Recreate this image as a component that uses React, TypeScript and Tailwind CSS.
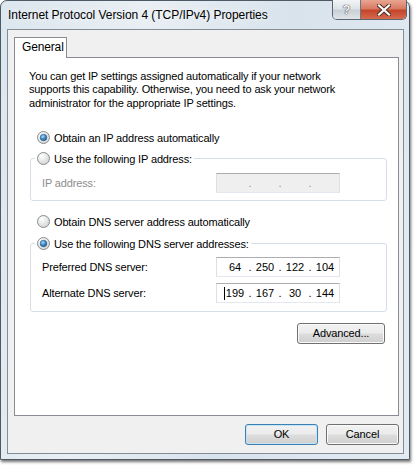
import React from "react";

const font = { fontFamily: '"Liberation Sans", Arial, sans-serif' };

const Radio = ({ checked }: { checked?: boolean }) => (
  <svg width="13" height="13" viewBox="0 0 13 13" className="shrink-0">
    <defs>
      <radialGradient id="rb" cx="0.35" cy="0.3" r="0.8">
        <stop offset="0" stopColor="#ffffff" />
        <stop offset="1" stopColor="#cfd1d3" />
      </radialGradient>
      <radialGradient id="rd" cx="0.4" cy="0.35" r="0.7">
        <stop offset="0" stopColor="#a9dcf7" />
        <stop offset="0.55" stopColor="#3f86c4" />
        <stop offset="1" stopColor="#1b4f86" />
      </radialGradient>
    </defs>
    <circle cx="6.5" cy="6.5" r="6" fill="url(#rb)" stroke="#8a8c8e" />
    {checked && <circle cx="6.5" cy="6.5" r="3.3" fill="url(#rd)" stroke="#2a5a8a" strokeWidth="0.6" />}
  </svg>
);

const RadioRow = ({ label, checked }: { label: string; checked?: boolean }) => (
  <div className="flex items-center gap-[4px] h-[14px] leading-[14px]">
    <Radio checked={checked} />
    <span>{label}</span>
  </div>
);

const IpBox = ({ values, disabled, caret }: { values: string[]; disabled?: boolean; caret?: boolean }) => (
  <div
    className={
      "w-[124px] h-[20px] border border-t-[#abadb3] border-x-[#dbdfe6] border-b-[#e3e9ef] flex items-center pl-[4px] tracking-normal " +
      (disabled ? "bg-[#efefef] text-[#7aa37a]" : "bg-white text-black")
    }
  >
    {values.map((v, i) => (
      <React.Fragment key={i}>
        <span className="w-[28px] text-center relative">
          {caret && i === 0 && <span className="inline-block w-px h-[13px] bg-black align-middle -ml-[2px] mr-px" />}
          {v}
        </span>
        {i < 3 && <span className="w-[2px] flex justify-center">.</span>}
      </React.Fragment>
    ))}
  </div>
);

const Btn = ({ children, w, def }: { children: React.ReactNode; w: string; def?: boolean }) => (
  <button
    className={
      "h-[21px] rounded-[3px] border bg-[linear-gradient(#f2f2f2_0%,#ebebeb_48%,#dddddd_52%,#cfcfcf_100%)] text-black leading-none " +
      w +
      (def ? " border-[#3c7fb1] shadow-[inset_0_0_0_1px_#c5e6f9]" : " border-[#707070] shadow-[inset_0_0_0_1px_#fafafa]")
    }
  >
    {children}
  </button>
);

export default function App() {
  return (
    <div className="w-[418px] h-[465px] bg-white text-[11px] tracking-[-0.15px] text-black" style={font}>
      <div className="w-[410px] h-[460px] rounded-t-[7px] border border-[#4e5966] bg-[linear-gradient(100deg,#dce6ee_0%,#e9eff4_30%,#d9e3ec_60%,#e3ebf2_100%)] shadow-[1px_2px_3px_rgba(0,0,0,0.55)] flex flex-col">
        <div className="h-[28px] relative">
          <div className="pl-[7px] pt-[7px] text-[12px] leading-[14px] tracking-[-0.05px] text-black [text-shadow:0_0_6px_#ffffff]">
            Internet Protocol Version 4 (TCP/IPv4) Properties
          </div>
          <div className="absolute top-[-1px] right-[2px] flex h-[20px] border border-t-0 border-[#5b6673] rounded-b-[5px] overflow-hidden">
            <div className="w-[28px] bg-[linear-gradient(#f3f5f7_0%,#dde3e8_45%,#c9d0d6_55%,#dfe4e8_100%)] border-r border-[#6e7780] flex items-center justify-center text-[13px] font-bold text-[#f7f7f7] [text-shadow:0_0_1px_#333,0_0_1px_#333]">
              ?
            </div>
            <div className="w-[45px] bg-[linear-gradient(#e9a693_0%,#d87a62_45%,#c4452b_55%,#d56b4f_100%)] flex items-center justify-center">
              <svg width="14" height="12" viewBox="0 0 14 12">
                <path d="M2 1.5 L12 10.5 M12 1.5 L2 10.5" stroke="#4a2a22" strokeWidth="4" strokeLinecap="square" />
                <path d="M2 1.5 L12 10.5 M12 1.5 L2 10.5" stroke="#ffffff" strokeWidth="2.2" strokeLinecap="square" />
              </svg>
            </div>
          </div>
        </div>
        <div className="ml-[6px] mr-[5px] mb-[5px] flex-1 border border-[#838d97] bg-[#f0f0f0] flex flex-col pl-[6px] pt-[7px]">
          <div className="flex">
            <div className="w-[53px] h-[21px] bg-white border border-b-0 border-[#898c95] pl-[7px] pt-[2px] leading-[14px] text-[12px] relative z-10 -mb-px">
              General
            </div>
          </div>
          <div className="w-[385px] h-[359px] bg-white border border-[#898c95] pl-[15px] pr-[11px] flex flex-col">
            <p className="mt-[12px] -ml-px leading-[13.3px]">
              You can get IP settings assigned automatically if your network
              <br />
              supports this capability. Otherwise, you need to ask your network
              <br />
              administrator for the appropriate IP settings.
            </p>
            <div className="mt-[21px] pl-[7px]">
              <RadioRow label="Obtain an IP address automatically" checked />
            </div>
            <fieldset className="mt-[7px] border border-[#d5dfe5] rounded-[3px] pb-[7px]">
              <legend className="ml-[4px] px-[2px]">
                <RadioRow label="Use the following IP address:" />
              </legend>
              <div className="flex items-center mt-[7px] pl-[11px]">
                <span className="w-[174px] text-[#8d8d8d]">IP address:</span>
                <IpBox values={["", "", "", ""]} disabled />
              </div>
            </fieldset>
            <div className="mt-[14px] pl-[7px]">
              <RadioRow label="Obtain DNS server address automatically" />
            </div>
            <fieldset className="mt-[8px] border border-[#d5dfe5] rounded-[3px] pb-[8px]">
              <legend className="ml-[4px] px-[2px]">
                <RadioRow label="Use the following DNS server addresses:" checked />
              </legend>
              <div className="flex items-center mt-[6px] pl-[11px]">
                <span className="w-[174px]">Preferred DNS server:</span>
                <IpBox values={["64", "250", "122", "104"]} />
              </div>
              <div className="flex items-center mt-[6px] pl-[11px]">
                <span className="w-[174px]">Alternate DNS server:</span>
                <IpBox values={["199", "167", "30", "144"]} caret />
              </div>
            </fieldset>
            <div className="flex justify-end mt-[11px] pr-[2px]">
              <Btn w="w-[88px]">Advanced...</Btn>
            </div>
          </div>
          <div className="w-[385px] flex justify-end gap-[8px] mt-[8px]">
            <Btn w="w-[73px]" def>
              OK
            </Btn>
            <Btn w="w-[73px]">Cancel</Btn>
          </div>
        </div>
      </div>
    </div>
  );
}
